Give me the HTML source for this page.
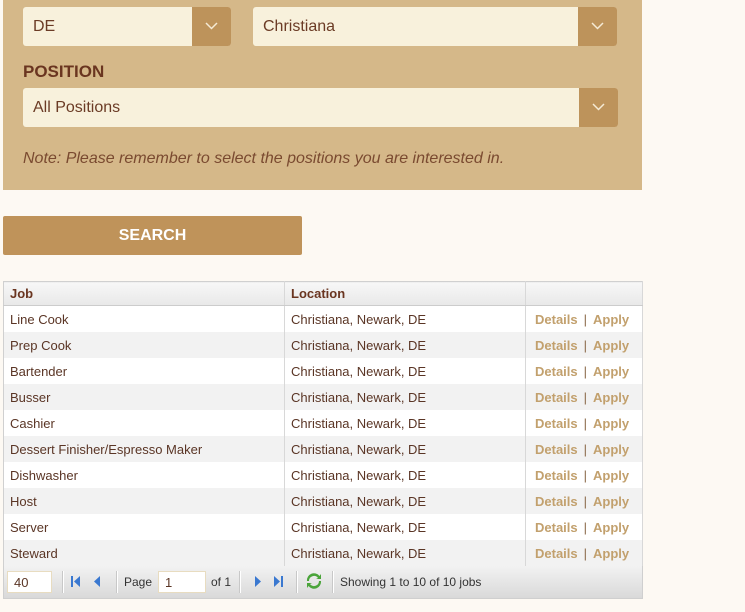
<!DOCTYPE html>
<html><head><style>
body{margin:0;background:#fdf9f3;font-family:"Liberation Sans",Arial,sans-serif;width:745px;height:612px;overflow:hidden;position:relative}
.panel{position:absolute;left:3px;top:0;width:639px;height:190px;background:#d5b889}
.sel{position:absolute;height:39px;background:#f8f1dc;border-radius:3px;color:#6b3b25;font-size:16px;line-height:39px;box-sizing:border-box;padding-left:10px}
.sel .ar{position:absolute;right:0;top:0;width:39px;height:39px;background:#bd935b;border-radius:0 3px 3px 0}
.sel .ar svg{position:absolute;left:13px;top:15px}
.lbl{position:absolute;left:23px;top:62px;font-weight:bold;font-size:17px;color:#6a3520}
.note{position:absolute;left:23px;top:150px;font-style:italic;font-size:16px;color:#7a4a30}
.btn{position:absolute;left:3px;top:216px;width:299px;height:39px;background:#bf935a;border-radius:2px;color:#fff;font-weight:bold;font-size:16px;text-align:center;line-height:39px}
table{position:absolute;left:3px;top:281px;width:640px;border-collapse:collapse;font-size:13px;color:#5a3525;border:1px solid #d0d0d0}
td,th{height:26px;padding:0 6px;border-right:1px solid #d8d8d8;text-align:left;white-space:nowrap}
th{height:23px;background:linear-gradient(#f7f7f7,#e8e8e8);font-weight:bold;color:#6a3520;border-bottom:1px solid #ccc}
tr:nth-child(odd) td{background:#f2f2f2}
tr:nth-child(even) td{background:#fff}
.a{color:#c2a06d;font-weight:bold;padding-left:9px}
.a span{color:#8b6a4a;font-weight:normal;margin:0 6px}
.foot{position:absolute;left:3px;top:566px;width:638px;height:32px;background:linear-gradient(#f2f2f2,#d9d9d9);border:1px solid #cfcfcf;border-top:none;font-size:12px;color:#333}
.foot>*{position:absolute}
.inp{background:#fff;border:1px solid #e8dcc0;height:22px;top:5px;line-height:22px;padding-left:6px;box-sizing:border-box;color:#5a3525;font-size:13px}
.sep{top:5px;width:1px;height:22px;background:#c8c8c8;border-right:1px solid #fff}
</style></head><body>
<div class="panel"></div>
<div class="sel" style="left:23px;top:7px;width:208px">DE<div class="ar"><svg width="13" height="8"><path d="M1 1l5.5 5.5L12 1" stroke="#f5ead5" stroke-width="1.5" fill="none"/></svg></div></div>
<div class="sel" style="left:253px;top:7px;width:364px">Christiana<div class="ar"><svg width="13" height="8"><path d="M1 1l5.5 5.5L12 1" stroke="#f5ead5" stroke-width="1.5" fill="none"/></svg></div></div>
<div class="lbl">POSITION</div>
<div class="sel" style="left:23px;top:88px;width:595px">All Positions<div class="ar"><svg width="13" height="8"><path d="M1 1l5.5 5.5L12 1" stroke="#f5ead5" stroke-width="1.5" fill="none"/></svg></div></div>
<div class="note">Note: Please remember to select the positions you are interested in.</div>
<div class="btn">SEARCH</div>
<table>
<tr><th style="width:268px">Job</th><th style="width:228px">Location</th><th></th></tr>
<tr><td>Line Cook</td><td>Christiana, Newark, DE</td><td class="a">Details<span>|</span>Apply</td></tr>
<tr><td>Prep Cook</td><td>Christiana, Newark, DE</td><td class="a">Details<span>|</span>Apply</td></tr>
<tr><td>Bartender</td><td>Christiana, Newark, DE</td><td class="a">Details<span>|</span>Apply</td></tr>
<tr><td>Busser</td><td>Christiana, Newark, DE</td><td class="a">Details<span>|</span>Apply</td></tr>
<tr><td>Cashier</td><td>Christiana, Newark, DE</td><td class="a">Details<span>|</span>Apply</td></tr>
<tr><td>Dessert Finisher/Espresso Maker</td><td>Christiana, Newark, DE</td><td class="a">Details<span>|</span>Apply</td></tr>
<tr><td>Dishwasher</td><td>Christiana, Newark, DE</td><td class="a">Details<span>|</span>Apply</td></tr>
<tr><td>Host</td><td>Christiana, Newark, DE</td><td class="a">Details<span>|</span>Apply</td></tr>
<tr><td>Server</td><td>Christiana, Newark, DE</td><td class="a">Details<span>|</span>Apply</td></tr>
<tr><td>Steward</td><td>Christiana, Newark, DE</td><td class="a">Details<span>|</span>Apply</td></tr>
</table>
<div class="foot">
<div class="inp" style="left:3px;width:45px">40</div>
<div class="sep" style="left:58px"></div>
<svg style="left:66px;top:9px" width="40" height="14"><rect x="1" y="1" width="2" height="11" fill="#3a78d0"/><path d="M10 1L4 6.5 10 12z" fill="#3a78d0"/><path d="M30 1L24 6.5 30 12z" fill="#3a78d0"/></svg>
<div class="sep" style="left:112px"></div>
<div style="left:120px;top:9px">Page</div>
<div class="inp" style="left:154px;width:48px">1</div>
<div style="left:207px;top:9px">of 1</div>
<div class="sep" style="left:235px"></div>
<svg style="left:248px;top:9px" width="40" height="14"><path d="M3 1L9 6.5 3 12z" fill="#3a78d0"/><path d="M22 1L28 6.5 22 12z" fill="#3a78d0"/><rect x="29" y="1" width="2" height="11" fill="#3a78d0"/></svg>
<div class="sep" style="left:292px"></div>
<svg style="left:302px;top:7px" width="16" height="16"><path d="M3 8a5 5 0 0 1 9-3l-2 1h5V1l-1.5 2A7 7 0 0 0 1 8z" fill="#4aa43a"/><path d="M13 8a5 5 0 0 1-9 3l2-1H1v5l1.5-2A7 7 0 0 0 15 8z" fill="#4aa43a"/></svg>
<div class="sep" style="left:328px"></div>
<div style="left:336px;top:9px">Showing 1 to 10 of 10 jobs</div>
</div>
</body></html>
